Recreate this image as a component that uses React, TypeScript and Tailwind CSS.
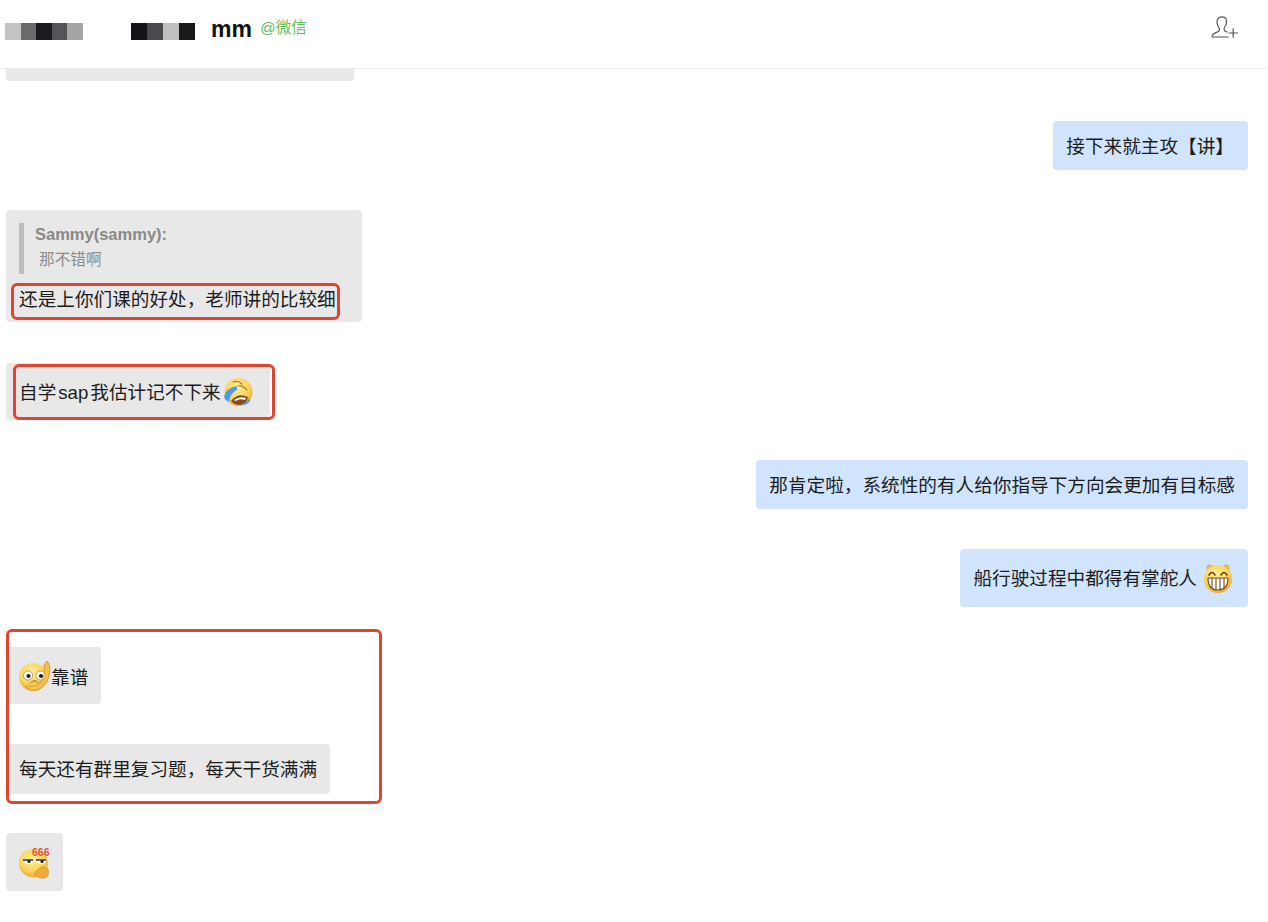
import React from "react";

const FaceGradient = ({ id }: { id: string }) => (
  <defs>
    <radialGradient id={id} cx="45%" cy="35%" r="70%">
      <stop offset="0%" stopColor="#fff09a" />
      <stop offset="60%" stopColor="#fbd45c" />
      <stop offset="100%" stopColor="#e9a033" />
    </radialGradient>
  </defs>
);

const LaughCry = () => (
  <svg width="30" height="30" viewBox="0 0 30 30" className="shrink-0">
    <FaceGradient id="laugh" />
    <circle cx="15.5" cy="15" r="14" fill="url(#laugh)" />
    <path d="M10 5 Q15 3 19 7 M15 9 Q20 8 24 13" stroke="#b67a24" strokeWidth="1.2" fill="none" strokeLinecap="round" />
    <path d="M8 24 Q15 15 25 20 Q24 27 17 28 Q11 28 8 24Z" fill="#8a4a1c" />
    <path d="M11 23 Q16 19 23 21 L22 23 Q16 21 13 24Z" fill="#fff" />
    <path d="M1 20 Q3 11 13 9 Q15 11 14 13 Q8 15 6 24 Q3 25 1 20Z" fill="#4d9be8" />
    <path d="M19 27 Q24 25 27 21 L27 24 Q24 28 20 28Z" fill="#4d9be8" />
  </svg>
);

const BigGrin = () => (
  <svg width="30" height="30" viewBox="0 0 30 30" className="shrink-0">
    <FaceGradient id="grin" />
    <circle cx="7" cy="5" r="3.5" fill="#d9b270" />
    <circle cx="23" cy="5" r="3.5" fill="#d9b270" />
    <circle cx="15" cy="16" r="14" fill="url(#grin)" />
    <path d="M6 12 Q9 7 12 12 M18 12 Q21 7 24 12" stroke="#5b3a14" strokeWidth="1.5" fill="none" strokeLinecap="round" />
    <path d="M5 15 H25 Q25 27 15 27 Q5 27 5 15Z" fill="#fff" stroke="#7b4a16" strokeWidth="1.2" />
    <path d="M9 15 V25 M13 15 V27 M17 15 V27 M21 15 V25" stroke="#7b4a16" strokeWidth="1.1" />
  </svg>
);

const Thinking = () => (
  <svg width="32" height="32" viewBox="0 0 32 32" className="shrink-0">
    <FaceGradient id="think" />
    <circle cx="14" cy="17" r="14" fill="url(#think)" />
    <circle cx="9" cy="15.5" r="4.6" fill="#fff" stroke="#b98229" strokeWidth="0.8" />
    <circle cx="21.5" cy="15.5" r="4.6" fill="#fff" stroke="#b98229" strokeWidth="0.8" />
    <circle cx="9.5" cy="16" r="2.1" fill="#1d1d1d" />
    <circle cx="22" cy="16" r="2.1" fill="#1d1d1d" />
    <path d="M28 1 Q32 5 30.5 13 Q29 25 19 30 Q10 32 6 26 Q16 27 21 23 Q26 18 25.5 10 L25 5 Z" fill="#f5bf4d" stroke="#d28f2a" strokeWidth="0.8" />
    <path d="M10 24 Q15 20 20 23 M12 22 Q15 19 18 21" stroke="#c58a2c" strokeWidth="1" fill="none" />
  </svg>
);

const Six = () => (
  <svg width="32" height="38" viewBox="0 0 32 38" className="shrink-0">
    <FaceGradient id="six" />
    <circle cx="15.5" cy="20" r="14.5" fill="url(#six)" />
    <ellipse cx="10" cy="18.5" rx="4.5" ry="2.2" fill="#fff" />
    <ellipse cx="23" cy="18.5" rx="4.5" ry="2.2" fill="#fff" />
    <path d="M5 17 H15 M18 17 H28" stroke="#333" strokeWidth="1.5" />
    <circle cx="11" cy="18.5" r="1.6" fill="#222" />
    <circle cx="24" cy="18.5" r="1.6" fill="#222" />
    <path d="M19 27 Q25 21 30 26 Q32 33 27 35 Q20 36 16 31 Z" fill="#f0ac3a" stroke="#cf8d2b" strokeWidth="0.6" />
    <text x="14" y="13" fontSize="10.5" fontWeight="700" fill="#e8503f" fontFamily="Liberation Sans">666</text>
  </svg>
);

const UserPlus = () => (
  <svg width="30" height="26" viewBox="0 0 30 26" fill="none" stroke="#555" strokeWidth="1.2" strokeLinecap="round" strokeLinejoin="round">
    <path d="M2 21 C2.5 18.5 6 18 9 16 C10 15 9.5 13.5 8.5 12 C7 9.5 6.5 7 7.5 4.5 C8.5 2.5 10.5 1.8 12 1.8 C14 1.8 16 3 16.5 5.5 C17 8 16 10.5 14.5 12.5 C13.5 14 14 16 17 17" />
    <path d="M2 22 H18" />
    <path d="M19 18 H27.5 M23.2 13.8 V22.2" />
  </svg>
);

const mosaicLeft = ["bg-[#c3c3c3]", "bg-[#6a6a6a]", "bg-[#1c1c20]", "bg-[#555558]", "bg-[#a5a5a5]"];
const mosaicRight = ["bg-[#141418]", "bg-[#4a4a4e]", "bg-[#c0c0c0]", "bg-[#1a1a1a]"];

const Bubble = ({ side, className, children }: { side: "left" | "right"; className?: string; children: React.ReactNode }) => (
  <div className={`flex ${side === "right" ? "justify-end" : "justify-start"}`}>
    <div className={`flex items-center rounded-[4px] text-[18.64px] leading-[25px] text-[#1c1c1c] ${side === "right" ? "bg-[#d0e5fd]" : "bg-[#e8e8e8]"} ${className ?? "px-[13px]"}`}>
      {children}
    </div>
  </div>
);

export default function App() {
  return (
    <div className="relative h-[922px] w-full overflow-hidden bg-white font-['Liberation_Sans','Noto_Sans_CJK_SC',sans-serif]">
      <header className="flex h-[69px] items-center border-b border-[#ececec] pb-[10px]">
        <div className="ml-[5px] mt-[4px] flex h-[17px] w-[78px]">
          {mosaicLeft.map((c) => (
            <div key={c} className={`h-full flex-1 ${c}`} />
          ))}
        </div>
        <div className="ml-[48px] mt-[4px] flex h-[17px] w-[64px]">
          {mosaicRight.map((c) => (
            <div key={c} className={`h-full flex-1 ${c}`} />
          ))}
        </div>
        <span className="ml-[16px] text-[23px] font-bold leading-none text-[#111]">mm</span>
        <span className="mb-[2px] ml-[8px] text-[15.5px] leading-none text-[#5fc060]">@微信</span>
        <div className="mb-[3px] ml-auto mr-[28px]">
          <UserPlus />
        </div>
      </header>

      <main className="pl-[6px] pr-[20px]">
        <div className="h-[12px] w-[348px] rounded-b-[4px] bg-[#e8e8e8]" />

        <div className="mt-[40px]">
          <Bubble side="right" className="h-[49px] pl-[13px] pr-[14px] pt-[2px]">接下来就主攻【讲】</Bubble>
        </div>

        <div className="mt-[40px] h-[112px] w-[356px] rounded-[4px] bg-[#e8e8e8] px-[13px] pt-[13px]">
          <div className="h-[51px] border-l-[5px] border-[#bcbcbc] pl-[11px]">
            <div className="text-[16.5px] font-bold leading-[22px] text-[#888]">Sammy(sammy):</div>
            <div className="pl-[4px] pt-[3px] text-[15.7px] leading-[24px] text-[#8c8c8c]">那不错啊</div>
          </div>
          <div className="pt-[13px] text-[18.64px] leading-[25px] text-[#1c1c1c]">还是上你们课的好处，老师讲的比较细</div>
        </div>

        <div className="mt-[41px]">
          <Bubble side="left" className="h-[57px] w-[264px] px-[13px] pt-[2px]">
            <span>
              自学<span className="mx-[2px]">sap</span>我估计记不下来
            </span>
            <span className="ml-[2px] -mt-[2px]">
              <LaughCry />
            </span>
          </Bubble>
        </div>

        <div className="mt-[40px]">
          <Bubble side="right" className="h-[49px] px-[13px] pt-[2px]">那肯定啦，系统性的有人给你指导下方向会更加有目标感</Bubble>
        </div>

        <div className="mt-[40px]">
          <Bubble side="right" className="h-[58px] gap-[6px] pl-[13px] pr-[15px]">
            <span>船行驶过程中都得有掌舵人</span>
            <BigGrin />
          </Bubble>
        </div>

        <div className="mt-[40px]">
          <Bubble side="left" className="h-[57px] gap-0 px-[13px]">
            <Thinking />
            <span className="pt-[4px]">靠谱</span>
          </Bubble>
        </div>

        <div className="mt-[40px]">
          <Bubble side="left" className="h-[50px] px-[13px]">每天还有群里复习题，每天干货满满</Bubble>
        </div>

        <div className="mt-[39px]">
          <Bubble side="left" className="h-[58px] pl-[12px] pr-[13px]">
            <Six />
          </Bubble>
        </div>
      </main>

      {/* red annotations drawn over the chat */}
      <div className="absolute left-[11px] top-[283px] h-[37px] w-[329px] rounded-[6px] border-[3px] border-[#e2452f]" />
      <div className="absolute left-[13px] top-[364px] h-[56px] w-[262px] rounded-[6px] border-[3px] border-[#e2452f]" />
      <div className="absolute left-[6px] top-[629px] h-[175px] w-[376px] rounded-[6px] border-[3px] border-[#e2452f]" />
    </div>
  );
}
